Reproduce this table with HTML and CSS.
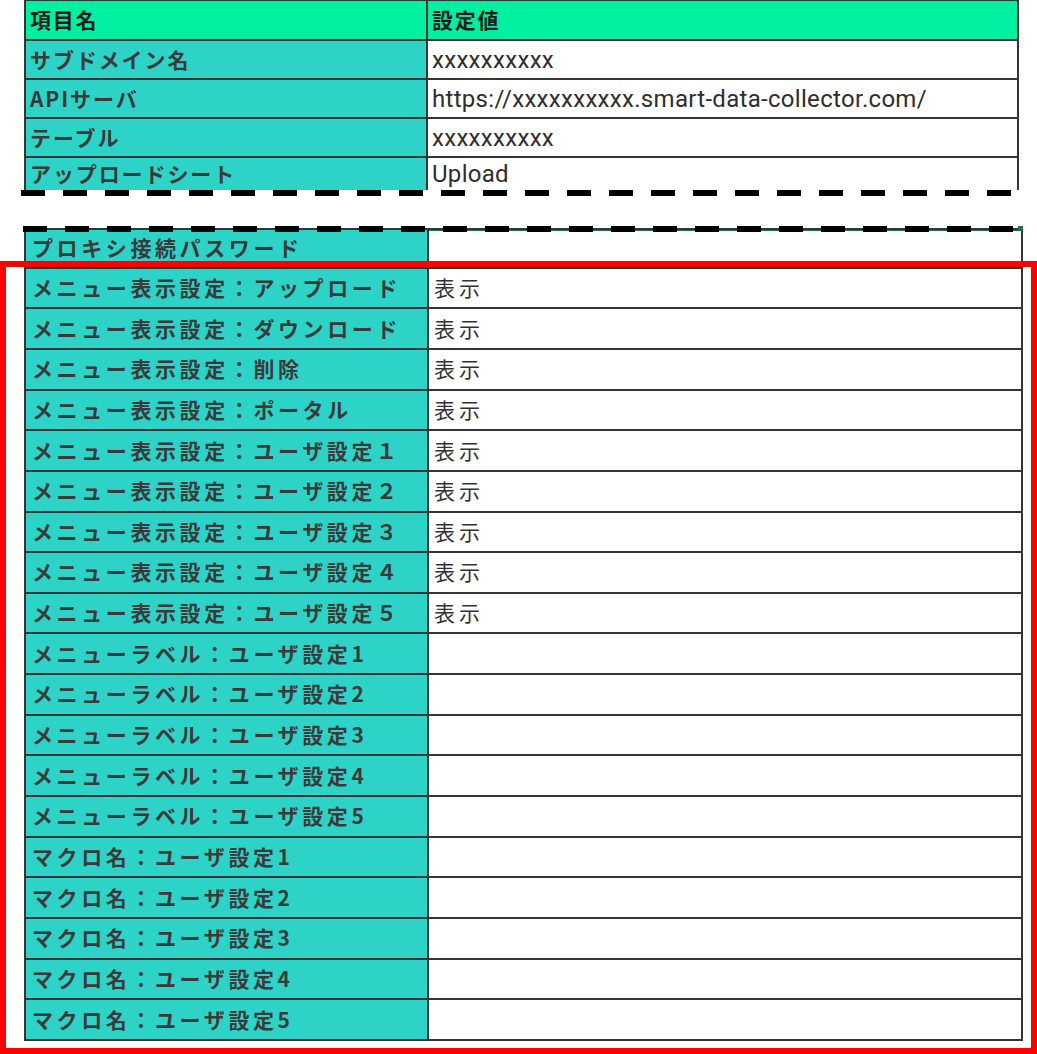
FILE: index.html
```html
<!DOCTYPE html>
<html lang="ja">
<head>
<meta charset="utf-8">
<title>設定</title>
<link rel="stylesheet" href="styles.css">
</head>
<body>
<div class="page">
  <div class="grid grid-top">
    <div class="cell head">項目名</div>
    <div class="cell head">設定値</div>
    <div class="cell label">サブドメイン名</div>
    <div class="cell value latin">xxxxxxxxxx</div>
    <div class="cell label">APIサーバ</div>
    <div class="cell value latin">https://xxxxxxxxxx.smart-data-collector.com/</div>
    <div class="cell label">テーブル</div>
    <div class="cell value latin">xxxxxxxxxx</div>
    <div class="cell label">アップロードシート</div>
    <div class="cell value latin">Upload</div>
  </div>
  <div class="dash dash-top"></div>

  <div class="lower">
    <div class="dash dash-mid"><span class="handle"></span></div>
    <div class="grid grid-low">
      <div class="cell label">プロキシ接続パスワード</div>
      <div class="cell value first"></div>
      <div class="cell label">メニュー表示設定：アップロード</div>
      <div class="cell value">表示</div>
      <div class="cell label">メニュー表示設定：ダウンロード</div>
      <div class="cell value">表示</div>
      <div class="cell label">メニュー表示設定：削除</div>
      <div class="cell value">表示</div>
      <div class="cell label">メニュー表示設定：ポータル</div>
      <div class="cell value">表示</div>
      <div class="cell label">メニュー表示設定：ユーザ設定１</div>
      <div class="cell value">表示</div>
      <div class="cell label">メニュー表示設定：ユーザ設定２</div>
      <div class="cell value">表示</div>
      <div class="cell label">メニュー表示設定：ユーザ設定３</div>
      <div class="cell value">表示</div>
      <div class="cell label">メニュー表示設定：ユーザ設定４</div>
      <div class="cell value">表示</div>
      <div class="cell label">メニュー表示設定：ユーザ設定５</div>
      <div class="cell value">表示</div>
      <div class="cell label">メニューラベル：ユーザ設定1</div>
      <div class="cell value"></div>
      <div class="cell label">メニューラベル：ユーザ設定2</div>
      <div class="cell value"></div>
      <div class="cell label">メニューラベル：ユーザ設定3</div>
      <div class="cell value"></div>
      <div class="cell label">メニューラベル：ユーザ設定4</div>
      <div class="cell value"></div>
      <div class="cell label">メニューラベル：ユーザ設定5</div>
      <div class="cell value"></div>
      <div class="cell label">マクロ名：ユーザ設定1</div>
      <div class="cell value"></div>
      <div class="cell label">マクロ名：ユーザ設定2</div>
      <div class="cell value"></div>
      <div class="cell label">マクロ名：ユーザ設定3</div>
      <div class="cell value"></div>
      <div class="cell label">マクロ名：ユーザ設定4</div>
      <div class="cell value"></div>
      <div class="cell label">マクロ名：ユーザ設定5</div>
      <div class="cell value"></div>
    </div>
    <div class="red-frame"></div>
  </div>
</div>
</body>
</html>
```

FILE: styles.css
```css
html, body {
  margin: 0;
  padding: 0;
  background: #ffffff;
}

body {
  width: 1037px;
  height: 1054px;
  overflow: hidden;
  font-family: "Noto Sans CJK JP", "Noto Sans", sans-serif;
}

.page {
  display: flex;
  flex-direction: column;
}

.grid {
  display: grid;
  gap: 2px;
  background: #353535;
}

.grid-top {
  margin-left: 24px;
  width: 995px;
  padding: 1px 2px 0 2px;
  box-sizing: border-box;
  grid-template-columns: 400px 1fr;
  grid-template-rows: 38px 37px 37px 37px 32px;
}

.cell {
  display: flex;
  align-items: center;
  white-space: nowrap;
  overflow: hidden;
  color: #3a3a3a;
  padding-bottom: 2px;
  box-sizing: border-box;
}

.head {
  background: #00efa0;
  font-weight: 700;
  font-size: 21px;
  letter-spacing: 1.7px;
  color: #1c1c1c;
  padding-left: 4px;
}

.label {
  background: #2ed3c8;
  font-weight: 700;
  font-size: 21px;
  letter-spacing: 1.9px;
  padding-left: 4px;
}

.value {
  background: #ffffff;
  font-size: 21px;
  letter-spacing: 4px;
  padding-left: 5px;
  color: #333333;
}

.latin {
  font-family: Roboto, "Liberation Sans", sans-serif;
  font-size: 24px;
  letter-spacing: 0.3px;
  padding-left: 4px;
  padding-bottom: 0;
  color: #2e2e2e;
}

.dash {
  height: 6px;
  background: repeating-linear-gradient(90deg, #000000 0 24px, transparent 24px 42px);
}

.dash-top {
  margin-left: 21px;
  width: 992px;
}

.lower {
  position: relative;
  margin-top: 30px;
  padding-bottom: 13px;
}

.dash-mid {
  position: relative;
  z-index: 2;
  margin-left: 23px;
  width: 994px;
  margin-bottom: -4px;
}

.handle {
  position: absolute;
  right: -6px;
  top: 0;
  width: 5px;
  height: 5px;
  background: #217346;
}

.grid-low {
  margin-left: 24px;
  width: 999px;
  padding: 2px;
  box-sizing: border-box;
  grid-template-columns: 401px 1fr;
  grid-template-rows: 36.7px;
  grid-auto-rows: 38.65px;
}

.grid-low .label {
  letter-spacing: 3.6px;
  padding-left: 6px;
}

.grid-low .value {
  padding-left: 5px;
}

.first {
  box-shadow: inset 0 1px 0 #217346;
}

.red-frame {
  position: absolute;
  left: 0;
  right: 0;
  top: 35px;
  bottom: 0;
  border: 6px solid #ff0000;
  pointer-events: none;
}
```
